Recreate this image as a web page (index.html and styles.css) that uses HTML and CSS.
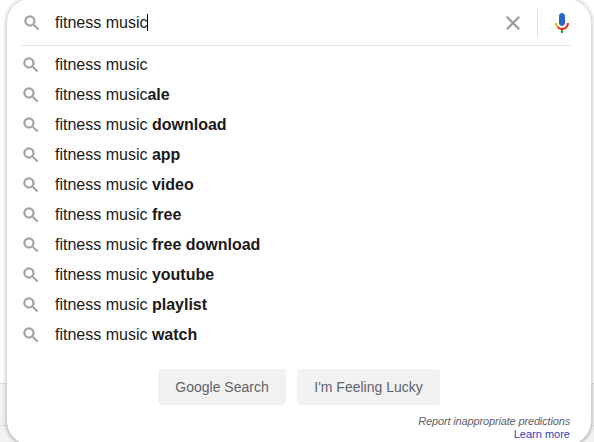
FILE: index.html
```html
<!DOCTYPE html>
<html lang="en">
<head>
<meta charset="UTF-8">
<meta name="viewport" content="width=device-width, initial-scale=1.0">
<title>Google</title>
<link rel="stylesheet" href="styles.css">
</head>
<body>

<svg width="0" height="0" class="defs">
  <symbol id="search-icon" viewBox="0 0 24 24">
    <path d="M15.5 14h-.79l-.28-.27A6.471 6.471 0 0 0 16 9.5 6.5 6.5 0 1 0 9.5 16c1.61 0 3.09-.59 4.23-1.57l.27.28v.79l5 4.99L20.49 19l-4.99-5zm-6 0C7.01 14 5 11.99 5 9.5S7.01 5 9.5 5 14 7.01 14 9.5 11.99 14 9.5 14z"/>
  </symbol>
</svg>

<div class="page">
  <div class="footer">
    <div class="footer-row"></div>
  </div>
</div>

<div class="search-card">
  <div class="search-bar">
    <svg class="icon"><use href="#search-icon"/></svg>
    <div class="query">fitness music<span class="caret"></span></div>
    <svg class="clear" viewBox="0 0 24 24">
      <path d="M19 6.41L17.59 5 12 10.59 6.41 5 5 6.41 10.59 12 5 17.59 6.41 19 12 13.41 17.59 19 19 17.59 13.41 12z"/>
    </svg>
    <span class="separator"></span>
    <svg class="mic" viewBox="0 0 24 24">
      <path fill="#2a66c8" d="M12 15c1.66 0 3-1.31 3-2.97v-7.02c0-1.66-1.34-3.01-3-3.01s-3 1.34-3 3.01v7.02c0 1.66 1.34 2.97 3 2.97z"/>
      <path fill="#16a04b" d="M11 18.08h2v3.92h-2z"/>
      <path fill="#fbb400" d="M7.05 16.87c-1.27-1.33-2.05-2.83-2.05-4.87h2c0 1.45.56 2.42 1.47 3.38v.32l-1.15 1.18z"/>
      <path fill="#f0280f" d="M12 16.93a4.97 5.25 0 0 1-3.54-1.55l-1.41 1.49c1.26 1.34 3.02 2.13 4.95 2.13 3.87 0 6.99-2.92 6.99-7h-1.99c0 2.92-2.24 4.93-5.01 4.93z"/>
    </svg>
  </div>

  <ul class="suggestions">
    <li><svg class="icon"><use href="#search-icon"/></svg><span>fitness music</span></li>
    <li><svg class="icon"><use href="#search-icon"/></svg><span>fitness music<b>ale</b></span></li>
    <li><svg class="icon"><use href="#search-icon"/></svg><span>fitness music <b>download</b></span></li>
    <li><svg class="icon"><use href="#search-icon"/></svg><span>fitness music <b>app</b></span></li>
    <li><svg class="icon"><use href="#search-icon"/></svg><span>fitness music <b>video</b></span></li>
    <li><svg class="icon"><use href="#search-icon"/></svg><span>fitness music <b>free</b></span></li>
    <li><svg class="icon"><use href="#search-icon"/></svg><span>fitness music <b>free download</b></span></li>
    <li><svg class="icon"><use href="#search-icon"/></svg><span>fitness music <b>youtube</b></span></li>
    <li><svg class="icon"><use href="#search-icon"/></svg><span>fitness music <b>playlist</b></span></li>
    <li><svg class="icon"><use href="#search-icon"/></svg><span>fitness music <b>watch</b></span></li>
  </ul>

  <div class="buttons">
    <button class="btn-search">Google Search</button>
    <button class="btn-lucky">I'm Feeling Lucky</button>
  </div>

  <div class="report">
    <span class="report-text">Report inappropriate predictions</span>
    <a class="learn" href="#">Learn more</a>
  </div>
</div>

</body>
</html>
```
FILE: styles.css
```css
* { box-sizing: border-box; }
body { margin: 0; font-family: Arial, "Liberation Sans", sans-serif; color: #1a1a1a; background-color: #fff; overflow: hidden; }
.defs { display: none; }
.page { display: flex; flex-direction: column; justify-content: flex-end; height: 442px; }
.footer { height: 59px; background-color: #f2f2f2; border-top: 1px solid #dcdcdc; }
.footer-row { height: 42px; border-bottom: 1px solid #e0e0e0; }

/* search box with its open suggestion list, on top of the page */
.search-card {
  position: absolute;
  top: -1px;
  left: 7px;
  width: 584px;
  height: 446px;
  background-color: #fff;
  border-radius: 24px;
  box-shadow: 0 0 0 2px rgba(32, 33, 36, 0.07), 0 0 0 4px rgba(32, 33, 36, 0.05), 0 2px 2px rgba(32, 33, 36, 0.12);
}
.icon { width: 20px; height: 20px; fill: #9aa0a6; stroke: #9aa0a6; stroke-width: 0.5; flex: none; }
.search-bar { display: flex; align-items: center; height: 47px; margin: 0 20px 0 14px; padding: 1px 0 0 1px; border-bottom: 1px solid #e4e6e8; }
.query { display: flex; align-items: center; flex: 1; margin-left: 13px; font-size: 16px; line-height: 20px; }
.caret { width: 1px; height: 17px; background-color: #000; }
.clear { width: 24px; height: 24px; margin-right: 12px; fill: #9299a1; }
.separator { width: 1px; height: 28px; margin-right: 12px; background-color: #dfe1e5; }
.mic { width: 24px; height: 24px; margin-right: -3px; }

.suggestions { list-style: none; margin: 0; padding: 4px 0 0 14px; }
.suggestions li { display: flex; align-items: center; gap: 14px; height: 30px; font-size: 16px; line-height: 20px; }

.buttons { display: flex; gap: 11px; margin: 19px 0 0 151px; }
.buttons button { height: 36px; padding: 0; border: none; border-radius: 4px; background-color: #f2f2f2; color: #5f6368; font-family: inherit; font-size: 14px; }
.btn-search { width: 128px; }
.btn-lucky { width: 143px; }

.report { display: flex; flex-direction: column; align-items: flex-end; margin: 10px 21px 0 0; font-size: 11px; line-height: 13px; }
.report-text { font-style: italic; letter-spacing: -0.15px; color: #5f6368; }
.learn { color: #2a3fc0; text-decoration: none; }
```
